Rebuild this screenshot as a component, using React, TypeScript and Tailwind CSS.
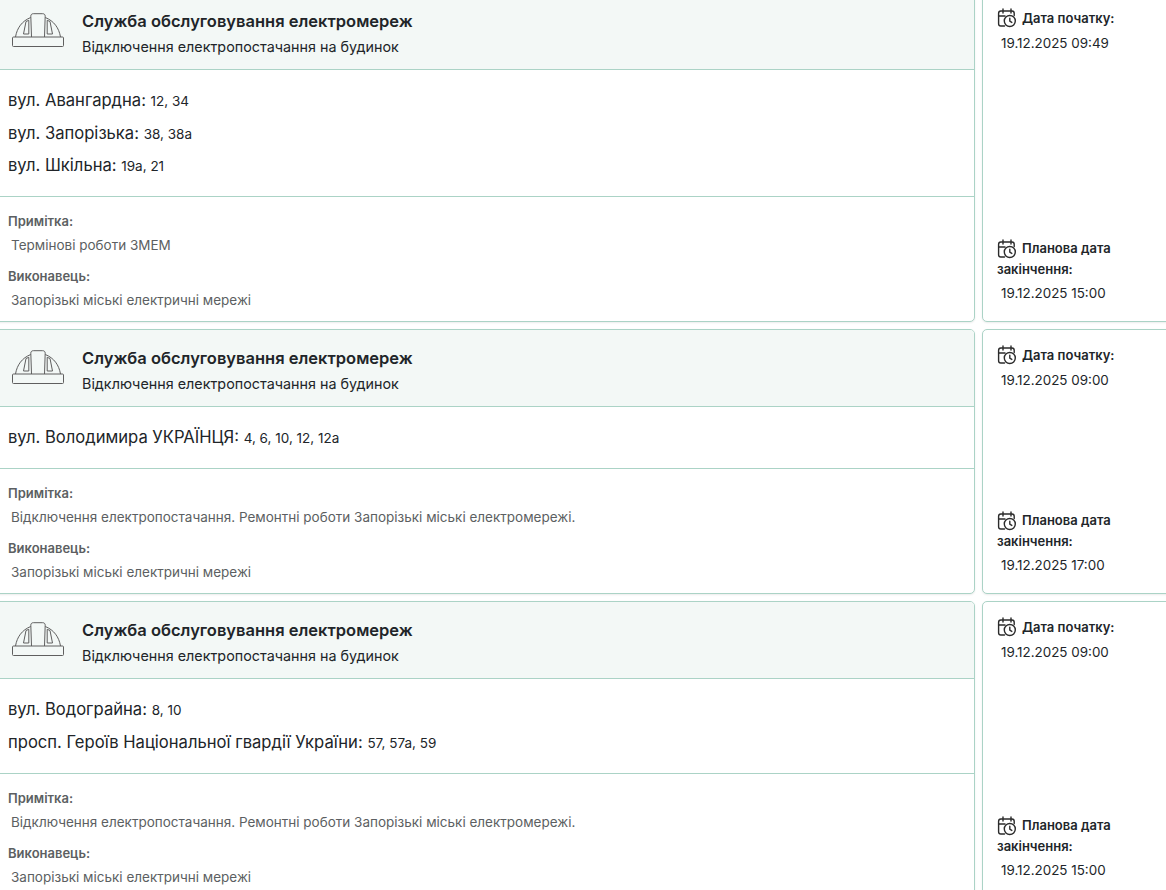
const font = { fontFamily: "Inter, 'Noto Sans', sans-serif" };

const HelmetIcon = () => (
  <svg width="52" height="34" viewBox="0 0 52 34" fill="none" stroke="#5f5f5f" strokeWidth="1" className="shrink-0">
    <rect x="0.500" y="24" width="51" height="9.500" rx="1" />
    <path d="M3.500 24C5 15 10 8 18.700 4.500M48.500 24C47 15 42 8 33.300 4.500" />
    <path d="M19.500 24L18.800 3.200C18.800 1.600 19.800 0.700 21.300 0.700H30.700C32.200 0.700 33.200 1.600 33.200 3.200L32.500 24" />
    <path d="M11.500 21L14 8.500L16.800 7.300V21ZM40.500 21L38 8.500L35.200 7.300V21Z" />
  </svg>
);

const CalendarClock = () => (
  <svg width="20" height="20" viewBox="0 0 20 20" fill="none" stroke="#2b2b2b" strokeWidth="1.400" strokeLinecap="round" strokeLinejoin="round" className="shrink-0">
    <path d="M7.500 18H3.800C2.600 18 1.600 17 1.600 15.800V5.200C1.600 4 2.600 3 3.800 3H15C16.200 3 17.200 4 17.200 5.200V7.500" />
    <path d="M6 1V5M14 1V5M1.600 8H8" />
    <circle cx="12.800" cy="13" r="5.500" />
    <path d="M12.800 10.300V13.200L14.800 14.400" />
  </svg>
);

type Street = { name: string; houses: string };
type Outage = {
  streets: Street[];
  streetsHeight: string;
  cardHeight: string;
  note: string;
  start: string;
  end: string;
};

const outages: Outage[] = [
  {
    streets: [
      { name: "вул. Авангардна:", houses: "12, 34" },
      { name: "вул. Запорізька:", houses: "38, 38а" },
      { name: "вул. Шкільна:", houses: "19а, 21" },
    ],
    streetsHeight: "h-[127px]",
    cardHeight: "h-[330px]",
    note: "Термінові роботи ЗМЕМ",
    start: "19.12.2025 09:49",
    end: "19.12.2025 15:00",
  },
  {
    streets: [{ name: "вул. Володимира УКРАЇНЦЯ:", houses: "4, 6, 10, 12, 12а" }],
    streetsHeight: "h-[62px]",
    cardHeight: "h-[265px]",
    note: "Відключення електропостачання. Ремонтні роботи Запорізькі міські електромережі.",
    start: "19.12.2025 09:00",
    end: "19.12.2025 17:00",
  },
  {
    streets: [
      { name: "вул. Водограйна:", houses: "8, 10" },
      { name: "просп. Героїв Національної гвардії України:", houses: "57, 57а, 59" },
    ],
    streetsHeight: "h-[95px]",
    cardHeight: "h-[298px]",
    note: "Відключення електропостачання. Ремонтні роботи Запорізькі міські електромережі.",
    start: "19.12.2025 09:00",
    end: "19.12.2025 15:00",
  },
];

const OutageRow = ({ item }: { item: Outage }) => (
  <div className={`flex gap-[7px] shrink-0 ${item.cardHeight}`}>
    <div className="w-[983px] -ml-[8px] shrink-0 flex flex-col border border-[#abd3c6] rounded-[5px] overflow-hidden bg-white shadow-[0_1px_2px_rgba(0,0,0,0.08)]">
      <div className="h-[77px] shrink-0 flex items-center gap-[18px] pl-[19px] pb-[2px] bg-[#f3f8f6] border-b border-[#abd3c6]">
        <HelmetIcon />
        <div className="flex flex-col gap-[7px] pt-[7px]">
          <div className="text-[16.500px] leading-[20px] font-semibold text-[#212529]">Служба обслуговування електромереж</div>
          <div className="text-[14.350px] leading-[18px] text-[#212529]">Відключення електропостачання на будинок</div>
        </div>
      </div>
      <div className={`shrink-0 flex flex-col justify-center gap-[8.500px] pl-[15px] pb-[1px] border-b border-[#abd3c6] ${item.streetsHeight}`}>
        {item.streets.map((street) => (
          <div key={street.name} className="h-[24px] text-[16.600px] leading-[24px] text-[#212529]">
            {street.name} <span className="text-[13.500px]">{street.houses}</span>
          </div>
        ))}
      </div>
      <div className="pl-[15px] pt-[15px] text-[#5c5f62]">
        <div className="text-[13px] leading-[18px] font-semibold">Примітка:</div>
        <div className="text-[13.500px] leading-[18px] pl-[3px] mt-[6px]">{item.note}</div>
        <div className="text-[13px] leading-[18px] font-semibold mt-[13px]">Виконавець:</div>
        <div className="text-[13.500px] leading-[18px] pl-[3px] mt-[6px]">Запорізькі міські електричні мережі</div>
      </div>
    </div>
    <div className="flex-1 flex flex-col justify-between border border-[#abd3c6] rounded-[5px] bg-white pl-[14px] pr-2 pt-[15px] pb-[19px] -mr-[20px] shadow-[0_1px_2px_rgba(0,0,0,0.08)]">
      <div>
        <div className="flex items-center gap-[5px] text-[13px] leading-[20px] font-semibold text-[#212529]">
          <CalendarClock />
          Дата початку:
        </div>
        <div className="text-[13.400px] leading-[18px] text-[#212529] pl-[4px] mt-[6px]">{item.start}</div>
      </div>
      <div>
        <div className="text-[13px] leading-[21px] font-semibold text-[#212529]">
          <span className="flex items-center gap-[5px]">
            <CalendarClock />
            Планова дата
          </span>
          закінчення:
        </div>
        <div className="text-[13.400px] leading-[18px] text-[#212529] pl-[4px] mt-[4px]">{item.end}</div>
      </div>
    </div>
  </div>
);

export default function App() {
  return (
    <div style={font} className="w-[1166px] h-[890px] overflow-hidden bg-white">
      <div className="flex flex-col gap-[7px] -mt-[8px]">
        {outages.map((item) => (
          <OutageRow key={item.streets[0].name} item={item} />
        ))}
      </div>
    </div>
  );
}
